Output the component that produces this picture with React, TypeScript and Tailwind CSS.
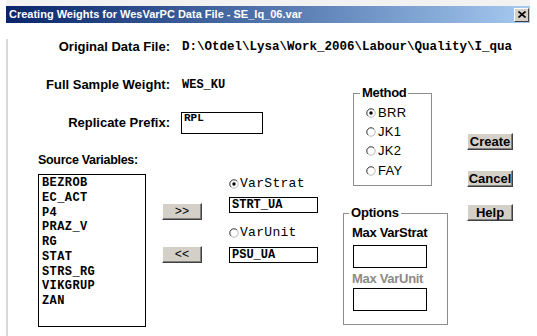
import React from "react";

const Radio = ({ checked }: { checked?: boolean }) => (
  <svg width="10" height="10" viewBox="0 0 10 10" className="shrink-0">
    <circle cx="5" cy="5" r="4.2" fill="white" stroke="#b8b8b8" strokeWidth="1" />
    <path d="M2 8 A4.2 4.2 0 0 1 8 2" stroke="#505050" strokeWidth="1" fill="none" />
    {checked && <circle cx="5" cy="5" r="1.7" fill="black" />}
  </svg>
);

const Btn = ({ label, mono }: { label: string; mono?: boolean }) => (
  <div
    className={`h-[17px] w-full flex items-center justify-center bg-[#d4d0c8] border-t border-l border-t-white border-l-white border-r border-b border-r-[#404040] border-b-[#404040] shadow-[inset_-1px_-1px_0_#808080] text-black ${
      mono ? "font-['Liberation_Mono',monospace] text-[12px]" : "font-bold text-[13px]"
    }`}
  >
    {label}
  </div>
);

const items = ["BEZROB", "EC_ACT", "P4", "PRAZ_V", "RG", "STAT", "STRS_RG", "VIKGRUP", "ZAN"];

export default function App() {
  return (
    <div className="w-[537px] h-[336px] bg-white overflow-hidden font-['Liberation_Sans',Arial,sans-serif] text-black">
      <div className="h-[6px] ml-[6px] w-[524px] bg-[#f2f2f2]" />
      <div className="ml-[6px] w-[524px] h-[17px] flex items-center bg-gradient-to-r from-[#0a246a] to-[#a6caf0]">
        <span className="pl-[3px] text-white font-bold text-[11px] leading-[17px] tracking-[0px] whitespace-nowrap">
          Creating Weights for WesVarPC Data File - SE_Iq_06.var
        </span>
        <div className="ml-auto mr-[1px] w-[15px] h-[14px] bg-[#d4d0c8] border-t border-l border-t-white border-l-white border-r border-b border-r-[#404040] border-b-[#404040] flex items-center justify-center">
          <svg width="8" height="7" viewBox="0 0 8 7">
            <path d="M0.5 0.5 L7.5 6.5 M7.5 0.5 L0.5 6.5" stroke="black" strokeWidth="1.6" />
          </svg>
        </div>
      </div>
      <div className="ml-[6px] border-l-2 border-[#d8d8d8] h-[313px]">
        {/* Row 1 */}
        <div className="mt-[16px] h-[16px] flex items-center whitespace-nowrap">
          <div className="w-[162px] text-right font-bold text-[13px] leading-[16px]">Original Data File:</div>
          <div className="ml-[12px] font-['Liberation_Mono',monospace] font-bold text-[12.5px] leading-[16px]">
            D:\Otdel\Lysa\Work_2006\Labour\Quality\I_qua
          </div>
        </div>
        <div className="flex">
          {/* Left area */}
          <div className="w-[335px]">
            <div className="mt-[22px] h-[16px] flex items-center whitespace-nowrap">
              <div className="w-[162px] text-right font-bold text-[13px] leading-[16px]">Full Sample Weight:</div>
              <div className="ml-[12px] font-['Liberation_Mono',monospace] font-bold text-[12px] leading-[16px]">WES_KU</div>
            </div>
            <div className="mt-[19px] h-[22px] flex items-center whitespace-nowrap">
              <div className="w-[162px] text-right font-bold text-[13px] leading-[16px]">Replicate Prefix:</div>
              <div className="ml-[11px] w-[82px] h-[22px] border border-black pl-[2px] font-['Liberation_Mono',monospace] font-bold text-[11px] leading-[11px]">
                RPL
              </div>
            </div>
            <div className="mt-[18px] h-[16px] pl-[30px] font-bold text-[12.5px] leading-[16px] tracking-[-0.3px] whitespace-nowrap">
              Source Variables:
            </div>
            <div className="mt-[6px] flex pl-[30px]">
              <div className="w-[108px] h-[153px] border border-black pt-[1px] pl-[3px] font-['Liberation_Mono',monospace] font-bold text-[12px] tracking-[0.4px]">
                {items.map((it) => (
                  <div key={it} className="h-[14.75px] leading-[14.75px]">
                    {it}
                  </div>
                ))}
              </div>
              <div className="ml-[16px] w-[40px]">
                <div className="mt-[29px]">
                  <Btn label=">>" mono />
                </div>
                <div className="mt-[26px]">
                  <Btn label="<<" mono />
                </div>
              </div>
              <div className="ml-[27px] w-[89px]">
                <div className="mt-[2px] h-[16px] flex items-center gap-[1px]">
                  <Radio checked />
                  <span className="font-['Liberation_Mono',monospace] text-[13px] leading-[16px] tracking-[0.3px]">VarStrat</span>
                </div>
                <div className="mt-[5px] h-[16px] border border-black pl-[2px] font-['Liberation_Mono',monospace] font-bold text-[12px] leading-[14px]">
                  STRT_UA
                </div>
                <div className="mt-[12px] h-[16px] flex items-center gap-[1px]">
                  <Radio />
                  <span className="font-['Liberation_Mono',monospace] text-[13px] leading-[16px] tracking-[0.3px]">VarUnit</span>
                </div>
                <div className="mt-[6px] h-[16px] border border-black pl-[2px] font-['Liberation_Mono',monospace] font-bold text-[12px] leading-[14px]">
                  PSU_UA
                </div>
              </div>
            </div>
          </div>
          {/* Right area */}
          <div className="w-[105px]">
            <div className="relative ml-[10px] mt-[38px] w-[79px] h-[93px] border border-[#8c8c8c] pt-[9px] pl-[12px]">
              <span className="absolute -top-[9px] left-[6px] px-[2px] bg-white font-bold text-[13px] leading-[16px] tracking-[-0.3px]">
                Method
              </span>
              {["BRR", "JK1", "JK2", "FAY"].map((m, i) => (
                <div key={m} className="h-[19.33px] flex items-center gap-[2px]">
                  <Radio checked={i === 0} />
                  <span className="text-[13px] leading-[16px] tracking-[0.3px]">{m}</span>
                </div>
              ))}
            </div>
            <div className="relative mt-[27px] w-[105px] h-[112px] border border-[#8c8c8c] pt-[11px] pl-[8px]">
              <span className="absolute -top-[9px] left-[5px] px-[2px] bg-white font-bold text-[13px] leading-[16px] tracking-[-0.2px]">
                Options
              </span>
              <div className="h-[16px] font-bold text-[13px] leading-[16px] tracking-[-0.3px] whitespace-nowrap">Max VarStrat</div>
              <div className="mt-[4px] ml-[1px] w-[74px] h-[23px] border border-black" />
              <div className="mt-[3px] h-[16px] font-bold text-[13px] leading-[16px] tracking-[-0.3px] text-[#8a8a8a] whitespace-nowrap">
                Max VarUnit
              </div>
              <div className="mt-[1px] ml-[1px] w-[74px] h-[23px] border border-black" />
            </div>
          </div>
          <div className="ml-[19px] w-[46px]">
            <div className="mt-[78px]">
              <Btn label="Create" />
            </div>
            <div className="mt-[20px]">
              <Btn label="Cancel" />
            </div>
            <div className="mt-[17px]">
              <Btn label="Help" />
            </div>
          </div>
        </div>
      </div>
    </div>
  );
}
